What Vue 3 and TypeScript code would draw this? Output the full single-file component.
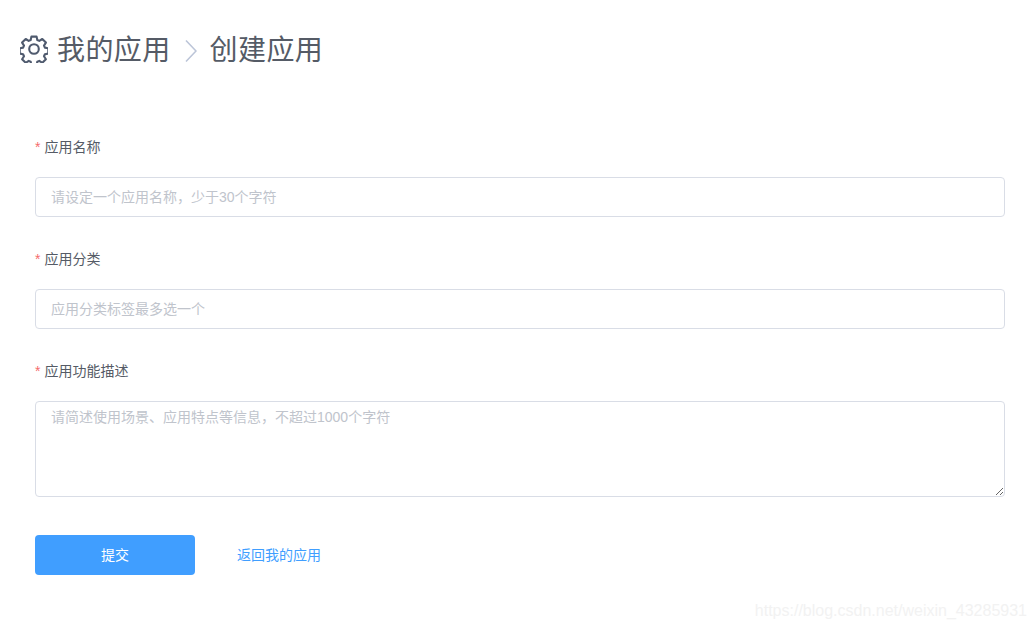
<script setup lang="ts">
const crumbs = { first: '我的应用', second: '创建应用' }
</script>

<template>
  <div class="page">
    <header class="head">
      <svg class="gear" viewBox="0 0 28 28" fill="none" stroke="#4f5a6e" stroke-width="2.1" stroke-linejoin="round">
        <path d="M11.4 1.6h5.2l.7 3.4 2 .9 3-1.9 3.6 3.6-1.9 3 .9 2 3.4.7v5.2l-3.4.7-.9 2 1.9 3-3.6 3.6-3-1.9-2 .9-.7 3.4h-5.2l-.7-3.4-2-.9-3 1.9-3.6-3.6 1.9-3-.9-2-3.4-.7v-5.2l3.4-.7.9-2-1.9-3 3.6-3.6 3 1.9 2-.9z" />
        <circle cx="14" cy="14" r="4.8" />
      </svg>
      <span class="crumb">{{ crumbs.first }}</span>
      <svg class="chev" viewBox="0 0 12 24" fill="none" stroke="#bcc5d8" stroke-width="1.6">
        <path d="M1 1.5 11 12 1 22.5" />
      </svg>
      <span class="crumb">{{ crumbs.second }}</span>
    </header>

    <form class="form" @submit.prevent>
      <div class="item">
        <label class="label"><i>*</i>应用名称</label>
        <input class="field" placeholder="请设定一个应用名称，少于30个字符" />
      </div>
      <div class="item">
        <label class="label"><i>*</i>应用分类</label>
        <input class="field" placeholder="应用分类标签最多选一个" />
      </div>
      <div class="item">
        <label class="label"><i>*</i>应用功能描述</label>
        <textarea class="field area" placeholder="请简述使用场景、应用特点等信息，不超过1000个字符"></textarea>
      </div>
      <div class="actions">
        <button class="submit" type="submit">提交</button>
        <a class="back">返回我的应用</a>
      </div>
    </form>
    <div class="mark">https://blog.csdn.net/weixin_43285931</div>
  </div>
</template>

<style>
html, body { margin: 0; background: #fff; }
</style>

<style scoped>
.page {
  position: relative;
  height: 629px;
  overflow: hidden;
  box-sizing: border-box;
  padding: 30px 29px 0 20px;
  font-family: "Liberation Sans", "Noto Sans CJK SC", sans-serif;
}
.head {
  display: flex;
  align-items: center;
  height: 38px;
}
.gear { width: 28px; height: 28px; margin-right: 9px; }
.crumb { font-size: 28px; line-height: 38px; letter-spacing: 0.4px; color: #555b66; position: relative; top: 2px; }
.chev { width: 12px; height: 24px; margin: 3px 13px 0 14px; }
.form { padding: 62px 0 0 15px; }
.item { margin-bottom: 25px; }
.label {
  display: block;
  font-size: 14px;
  line-height: 34px;
  height: 34px;
  margin-bottom: 13px;
  color: #555b66;
}
.label i { font-style: normal; color: #f56c6c; margin-right: 4px; }
.field {
  display: block;
  width: 100%;
  height: 40px;
  box-sizing: border-box;
  border: 1px solid #d9dde6;
  border-radius: 4px;
  padding: 0 15px;
  font: 14px "Liberation Sans", "Noto Sans CJK SC", sans-serif;
  color: #606266;
  outline: none;
  background: #fff;
}
.field::placeholder { color: #c0c4cc; opacity: 1; }
.area { height: 96px; padding: 5px 15px; line-height: 21px; resize: vertical; }
.actions { display: flex; align-items: center; padding-top: 13px; }
.submit {
  width: 160px;
  height: 40px;
  border: 0;
  border-radius: 4px;
  padding: 0 0 2px;
  background: #409eff;
  color: #fff;
  font: 14px "Liberation Sans", "Noto Sans CJK SC", sans-serif;
}
.back { margin: 0 0 2px 42px; font-size: 14px; color: #409eff; }
.mark {
  position: absolute;
  right: 7px;
  top: 600px;
  font-size: 16px;
  line-height: 22px;
  color: #f2f2f2;
}
</style>
